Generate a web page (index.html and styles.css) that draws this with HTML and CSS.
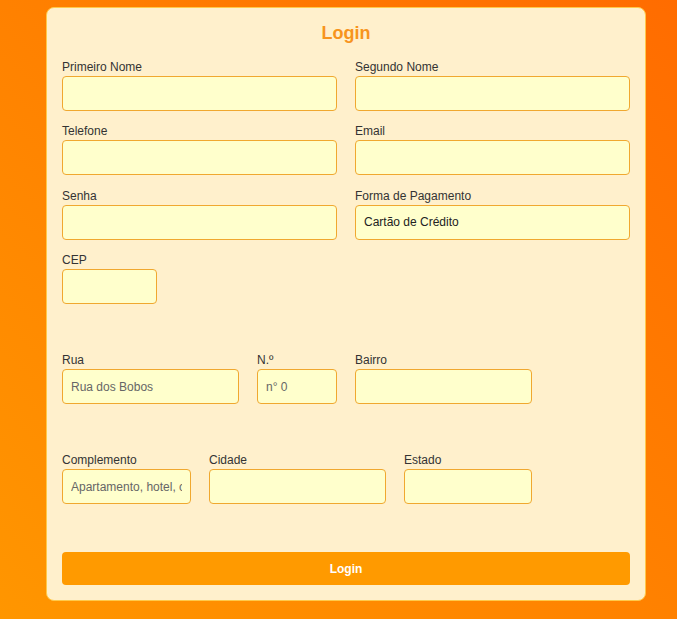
FILE: index.html
```html
<!DOCTYPE html>
<html lang="pt">
<head>
<meta charset="utf-8">
<title>Login</title>
<link rel="stylesheet" href="styles.css">
</head>
<body>
<form class="card">
  <h1 class="title">Login</h1>
  <div class="grid">
    <div class="field"><label>Primeiro Nome</label><input class="inp"></div>
    <div class="field"><label>Segundo Nome</label><input class="inp"></div>
    <div class="field"><label>Telefone</label><input class="inp"></div>
    <div class="field"><label>Email</label><input class="inp"></div>
    <div class="field"><label>Senha</label><input class="inp" type="password"></div>
    <div class="field"><label>Forma de Pagamento</label><input class="inp value" value="Cartão de Crédito"></div>
    <div class="field"><label>CEP</label><input class="inp w-cep"></div>
  </div>
  <div class="row row-addr">
    <div class="field"><label>Rua</label><input class="inp w177" placeholder="Rua dos Bobos"></div>
    <div class="field"><label>N.º</label><input class="inp w80" placeholder="n° 0"></div>
    <div class="field"><label>Bairro</label><input class="inp w177"></div>
  </div>
  <div class="row row-addr">
    <div class="field"><label>Complemento</label><input class="inp w129" placeholder="Apartamento, hotel, casa"></div>
    <div class="field"><label>Cidade</label><input class="inp w177"></div>
    <div class="field"><label>Estado</label><input class="inp w128"></div>
  </div>
  <button class="btn" type="button">Login</button>
</form>
</body>
</html>
```

FILE: styles.css
```css
html, body {
  margin: 0;
  height: 100%;
}
body {
  background: linear-gradient(to bottom left, #ff6c00, #ff9600);
  font-family: "Liberation Sans", Arial, sans-serif;
  padding: 7px 0 0 46px;
  box-sizing: border-box;
}
.card {
  width: 600px;
  box-sizing: border-box;
  background: #fff0cc;
  border: 1px solid #ffc94a;
  border-radius: 8px;
  padding: 15px;
}
.title {
  margin: 0 0 16px;
  text-align: center;
  color: #f7941d;
  font-size: 18px;
  line-height: 21px;
  font-weight: bold;
}
.grid {
  display: grid;
  grid-template-columns: 275px 275px;
  column-gap: 18px;
  row-gap: 13.4px;
}
.field {
  display: flex;
  flex-direction: column;
}
.field label {
  font-size: 12px;
  line-height: 14px;
  color: #333;
  margin-bottom: 2px;
}
.inp {
  height: 35px;
  box-sizing: border-box;
  background: #ffffcc;
  border: 1px solid #f0a830;
  border-radius: 4px;
  padding: 0 8px;
  font-family: "Liberation Sans", Arial, sans-serif;
  font-size: 12px;
  color: #222;
  outline: none;
  width: 100%;
}
.inp::placeholder {
  color: #666;
}
.inp.value {
  color: #222;
}
.w-cep { width: 95px; }
.w177 { width: 177px; }
.w80 { width: 80px; }
.w129 { width: 129px; }
.w128 { width: 128px; }
.row {
  display: flex;
  gap: 18px;
}
.row-addr {
  margin-top: 49px;
}
.btn {
  display: block;
  width: 100%;
  height: 33px;
  margin-top: 48px;
  background: #ff9a00;
  border: none;
  border-radius: 4px;
  color: #fff;
  font-family: "Liberation Sans", Arial, sans-serif;
  font-size: 12px;
  font-weight: bold;
}
```
